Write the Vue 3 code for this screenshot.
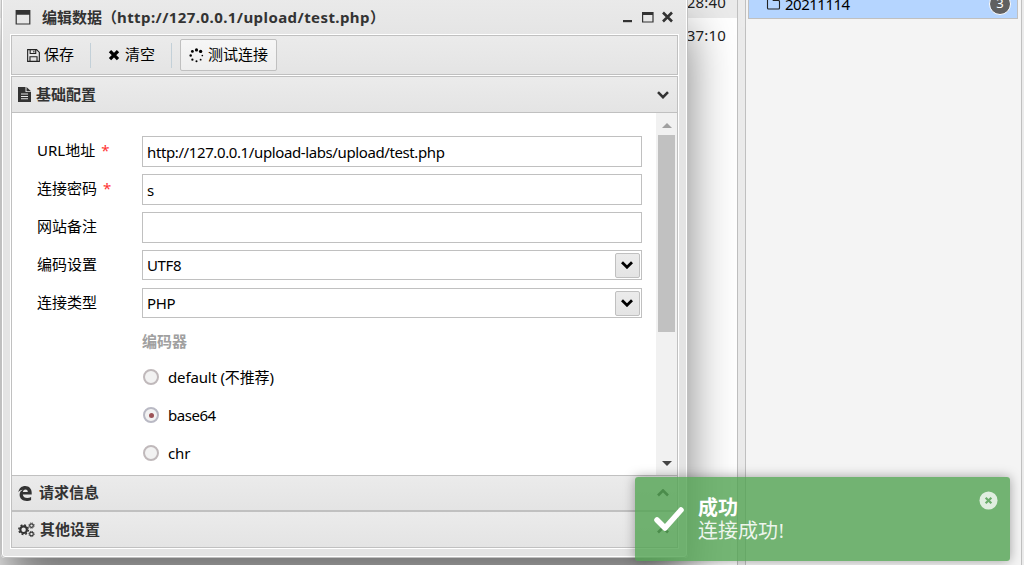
<template>
  <div class="page">
    <div class="list-panel">
      <div class="list-row shaded">28:40</div>
      <div class="list-row">37:10</div>
    </div>
    <div class="splitter"></div>
    <div class="side-panel">
      <div class="category">
        <svg class="folder" viewBox="0 0 16 14"><path d="M1.5 11V2.5q0-1 1-1h3.6l1.2 2h5.2q1 0 1 1V11q0 1-1 1h-10q-1 0-1-1z" /></svg>
        <span class="category-name">20211114</span>
        <span class="badge">3</span>
      </div>
    </div>

    <div class="window">
      <div class="window-title">
        <svg class="win-icon" viewBox="0 0 16 15"><path d="M.6 0h14.8v14.6H.6zM1.8 4.8v8.6h12.4V4.8z" fill-rule="evenodd" /></svg>
        <span class="title-text">编辑数据（<b>http://127.0.0.1/upload/test.php</b>）</span>
        <svg class="win-buttons" viewBox="0 0 52 14">
          <path d="M1 10h9v2.2H1z" />
          <path d="M20 2h11.6v10.6H20zM21.2 5v6.5h9.2V5z" fill-rule="evenodd" />
          <path d="M41 2.5l9 9m0-9l-9 9" class="cross" />
        </svg>
      </div>

      <div class="window-body">
        <div class="toolbar">
          <button class="tool">
            <svg class="tool-icon save" viewBox="0 0 14 14"><path d="M.7.7h9.6l3 3v9.6H.7zM3.4.7v4.2h6V.7M3.2 13.3V8.4h7.6v4.9M7.4 1.8v2" /></svg>
            <span>保存</span>
          </button>
          <i class="sep"></i>
          <button class="tool clear">
            <svg class="tool-icon cross" viewBox="0 0 14 14"><path d="M3 3.2l8 8m0-8l-8 8" /></svg>
            <span>清空</span>
          </button>
          <i class="sep"></i>
          <button class="tool active">
            <svg class="tool-icon spinner" viewBox="0 0 16 16">
              <circle v-for="d in dots" :key="d.x + '-' + d.y" :cx="d.x" :cy="d.y" :r="d.r" />
            </svg>
            <span>测试连接</span>
          </button>
        </div>

        <div class="acc-head first">
          <svg class="acc-icon file" viewBox="0 0 13 15"><path d="M0 0h7.5v5H13v10H0zM8.5 0L13 4.2H8.5zM3 6.6v1h7v-1zm0 2.3v1h7v-1zm0 2.3v1h7v-1z" fill-rule="evenodd" /></svg>
          <span>基础配置</span>
          <svg class="arrow" viewBox="0 0 12 8"><path d="M1 1.2l5 5 5-5" /></svg>
        </div>

        <div class="form-wrap">
          <div class="form">
            <div v-for="f in fields" :key="f.label" class="field">
              <label>{{ f.label }}<em v-if="f.required">*</em></label>
              <div class="control" :class="{ combo: f.select }">
                <span>{{ f.value }}</span>
                <i v-if="f.select" class="drop">
                  <svg viewBox="0 0 12 8"><path d="M1 1.2l5 5 5-5" /></svg>
                </i>
              </div>
            </div>
            <div class="group-label">编码器</div>
            <div v-for="e in encoders" :key="e" class="radio" @click="encoder = e">
              <i class="dot" :class="{ checked: encoder === e }"></i>
              <span>{{ e }}</span>
            </div>
          </div>
          <div class="scrollbar">
            <svg viewBox="0 0 10 5" class="up"><path d="M0 5l5-5 5 5z" /></svg>
            <div class="thumb"></div>
            <svg viewBox="0 0 10 5" class="down"><path d="M0 0h10L5 5z" /></svg>
          </div>
        </div>

        <div class="acc-head">
          <svg class="acc-icon edge-icon" viewBox="0 0 14 15"><path d="M.3 6.2C1.2 2.1 3.8.1 7.2.1c4 0 6.5 2.9 6.5 6.7v1.7H4.8c.2 2.5 2.2 3.5 4.4 3.5 1.4 0 2.7-.4 3.9-1.1v3c-1.2.7-2.8 1-4.5 1-4 0-7-2.2-7-6.1 0-2.2 1.1-4.1 3.2-5.1C2.7 3.9 1.4 4.7.3 6.2zM4.9 5.9h4.9c0-1.5-.8-2.5-2.3-2.5S5.1 4.4 4.9 5.9z" fill-rule="evenodd" /></svg>
          <span>请求信息</span>
          <svg class="arrow" viewBox="0 0 12 8"><path d="M1 6.5l5-5 5 5" /></svg>
        </div>
        <div class="acc-head last">
          <svg class="acc-icon cogs" viewBox="0 0 17 16">
            <circle cx="5.6" cy="7.7" r="3.3" stroke-width="2.2" />
            <circle cx="5.6" cy="7.7" r="4.8" stroke-width="1.5" stroke-dasharray="1.9 1.87" />
            <circle cx="13.5" cy="3.6" r="1.8" stroke-width="1.2" />
            <circle cx="13.5" cy="3.6" r="2.7" stroke-width=".9" stroke-dasharray="1.1 1.02" />
            <circle cx="13.5" cy="12" r="1.8" stroke-width="1.2" />
            <circle cx="13.5" cy="12" r="2.7" stroke-width=".9" stroke-dasharray="1.1 1.02" />
          </svg>
          <span>其他设置</span>
          <svg class="arrow" viewBox="0 0 12 8"><path d="M1 6.5l5-5 5 5" /></svg>
        </div>
      </div>
    </div>

    <div v-if="toast" class="toast">
      <svg class="check" viewBox="0 0 32 26"><path d="M4 14l8 8L28 4" /></svg>
      <div class="toast-text">
        <strong>成功</strong>
        <span>连接成功!</span>
      </div>
      <svg class="toast-close" viewBox="0 0 20 20" @click="toast = false">
        <circle cx="10" cy="10" r="9.5" />
        <path d="M7 7l6 6m0-6l-6 6" />
      </svg>
    </div>
  </div>
</template>

<script setup>
import { ref } from 'vue'

const fields = [
  { label: 'URL地址', required: true, value: 'http://127.0.0.1/upload-labs/upload/test.php' },
  { label: '连接密码', required: true, value: 's' },
  { label: '网站备注', value: '' },
  { label: '编码设置', value: 'UTF8', select: true },
  { label: '连接类型', value: 'PHP', select: true }
]

const encoders = ['default (不推荐)', 'base64', 'chr']
const encoder = ref('base64')
const toast = ref(true)

const dots = [
  { x: 8, y: 2, r: 1.7 },
  { x: 12.4, y: 3.6, r: 1.8 },
  { x: 14.2, y: 8, r: 0.9 },
  { x: 12.4, y: 12.4, r: 1 },
  { x: 8, y: 14.2, r: 1.1 },
  { x: 3.6, y: 12.4, r: 1.2 },
  { x: 1.8, y: 8, r: 1.3 },
  { x: 3.6, y: 3.6, r: 1.5 }
]
</script>

<style>
body {
  overflow: hidden;
}
</style>

<style scoped>
* {
  box-sizing: border-box;
}

.page {
  position: relative;
  display: flex;
  width: 1024px;
  height: 565px;
  overflow: hidden;
  background: #ebebeb;
  font-family: "Noto Sans", "Noto Sans CJK SC", sans-serif;
  font-size: 15px;
  color: #000;
}

.list-panel {
  width: 738px;
  background: #fff;
  border-right: 1px solid #c0c0c0;
}

.list-row {
  height: 34px;
  padding-right: 11px;
  text-align: right;
  line-height: 34px;
  letter-spacing: 0.2px;
  color: #222;
}

.list-row.shaded {
  height: 18px;
  line-height: 5px;
  background: #ebebeb;
}

.splitter {
  width: 7px;
}

.side-panel {
  width: 277px;
  padding: 0 3px 0 2px;
  background: #f4f4f4;
  border-left: 1px solid #c0c0c0;
  border-right: 1px solid #c0c0c0;
}

.category {
  display: flex;
  align-items: center;
  height: 19px;
  padding: 0 6px 11px 17px;
  background: #b5d5ff;
  border: 1px solid #c0c0c0;
  border-top: none;
}

.folder {
  width: 16px;
  height: 14px;
  fill: none;
  stroke: #222;
  stroke-width: 1.1;
}

.category-name {
  flex: 1;
  margin-left: 3px;
  line-height: 18px;
  letter-spacing: -0.5px;
}

.badge {
  width: 22px;
  height: 22px;
  border: 1px solid #fff;
  border-radius: 50%;
  background: #606060;
  color: #fff;
  font-size: 13px;
  line-height: 19px;
  text-align: center;
}

.window {
  position: absolute;
  left: 1px;
  top: -10px;
  width: 687px;
  height: 568px;
  padding: 10px 7px 7px 8px;
  background: linear-gradient(#ebebeb, #e4e4e4 50px);
  border: 1px solid #c0c0c0;
  border-radius: 4px;
  box-shadow: inset 0 0 0 1px #fff, 0 35px 50px -2px rgba(0, 0, 0, 0.55);
}

.window-title {
  display: flex;
  align-items: center;
  height: 34px;
  margin-top: -1px;
  padding: 0 6px 0 5px;
  color: #333;
}

.win-icon {
  width: 16px;
  height: 15px;
  fill: #333;
}

.title-text {
  flex: 1;
  margin-left: 11px;
  padding-bottom: 2px;
  font-weight: 700;
  white-space: nowrap;
}

.title-text b {
  font-weight: 700;
  letter-spacing: 0.42px;
}

.win-buttons {
  width: 52px;
  height: 14px;
  fill: #333;
}

.win-buttons .cross {
  stroke: #333;
  stroke-width: 2.6;
}

.window-body {
  width: 669px;
  height: 515px;
  padding: 1px;
  background: #fff;
}

.toolbar {
  display: flex;
  align-items: center;
  height: 40px;
  padding: 0 5px;
  background: linear-gradient(#ebebeb, #e4e4e4);
  border: 1px solid #c0c0c0;
}

.tool {
  display: flex;
  align-items: center;
  height: 32px;
  padding: 0 7px 0 9px;
  border: 1px solid transparent;
  background: none;
  color: #000;
  font: inherit;
  font-size: 15px;
}

.tool span {
  padding-bottom: 3px;
}

.tool.active {
  padding: 0 8px;
  border-color: #c0c0c0;
  border-radius: 2px;
  background: linear-gradient(#f6f6f6, #eeeeee);
}

.sep {
  width: 1px;
  height: 25px;
  margin: 0 8px;
  background: #c3d0d8;
}

.tool-icon {
  width: 14px;
  height: 14px;
  margin-right: 4px;
}

.tool-icon.save {
  width: 13px;
  height: 13px;
  margin-right: 4px;
}

.save path {
  fill: none;
  stroke: #222;
  stroke-width: 1.2;
}

.tool.clear {
  padding: 0 7px 0 7px;
}

.tool-icon.cross {
  margin-right: 4px;
  fill: none;
  stroke: #000;
  stroke-width: 3.3;
}

.spinner {
  width: 15px;
  height: 15px;
}

.acc-head {
  display: flex;
  align-items: center;
  height: 36px;
  padding: 0 8px 0 6px;
  background: linear-gradient(#ebebeb, #e4e4e4);
  border: 1px solid #c0c0c0;
  color: #333;
  font-weight: 700;
}

.acc-head.first {
  height: 37px;
  margin-top: 1px;
}

.acc-head.last {
  height: 37px;
}

.acc-head span {
  flex: 1;
  margin-left: 5px;
  padding-bottom: 3px;
}

.acc-icon {
  width: 14px;
  height: 15px;
  fill: #333;
}

.acc-icon.file {
  width: 13px;
}

.acc-icon.cogs {
  width: 17px;
  height: 16px;
  fill: none;
  stroke: #333;
}

.acc-head .edge-icon + span {
  margin-left: 7px;
}

.arrow {
  width: 12px;
  height: 8px;
  fill: none;
  stroke: #333;
  stroke-width: 2.6;
}

.form-wrap {
  display: flex;
  height: 362px;
  overflow: hidden;
  border-left: 1px solid #c0c0c0;
  border-right: 1px solid #c0c0c0;
}

.form {
  flex: 1;
  padding: 23px 14px 0 25px;
}

.field {
  display: flex;
  height: 38px;
}

.field label {
  width: 105px;
  line-height: 29px;
}

.field em {
  margin-left: 6px;
  color: #f33;
  font-style: normal;
}

.control {
  display: flex;
  align-items: center;
  width: 500px;
  height: 31px;
  padding: 1px 1px 0 4px;
  border: 1px solid #c0c0c0;
  letter-spacing: -0.39px;
}

.control.combo {
  height: 30px;
  padding-top: 0;
}

.control span {
  flex: 1;
}

.drop {
  display: flex;
  align-items: center;
  justify-content: center;
  width: 25px;
  height: 25px;
  padding-right: 2px;
  border: 1px solid #c0c0c0;
  border-radius: 2px;
  background: linear-gradient(#ebebeb, #e4e4e4);
}

.drop svg {
  width: 12px;
  height: 8px;
  fill: none;
  stroke: #000;
  stroke-width: 2.8;
}

.group-label {
  height: 32px;
  padding-left: 105px;
  color: #a0a0a0;
  font-weight: 700;
  line-height: 30px;
}

.radio {
  display: flex;
  align-items: center;
  height: 38px;
  padding-left: 106px;
}

.radio span {
  margin-left: 9px;
  padding-bottom: 1px;
  letter-spacing: -0.15px;
}

.dot {
  display: flex;
  align-items: center;
  justify-content: center;
  width: 16px;
  height: 16px;
  border: 2px solid #c0b9bb;
  border-radius: 50%;
  background: #f2f2f2;
}

.dot.checked {
  border-color: #b9b9c4;
}

.dot.checked + span {
  letter-spacing: -0.45px;
}

.dot.checked::after {
  content: "";
  width: 5px;
  height: 5px;
  border-radius: 50%;
  background: #9c5357;
}

.scrollbar {
  display: flex;
  flex-direction: column;
  align-items: center;
  width: 21px;
  padding: 10px 2px 9px;
  background: #f1f1f1;
}

.scrollbar svg {
  width: 10px;
  height: 5px;
}

.up {
  fill: #a0a0a0;
}

.down {
  margin-top: auto;
  fill: #444;
}

.thumb {
  width: 17px;
  height: 197px;
  margin-top: 7px;
  background: #c1c1c1;
}

.toast {
  position: absolute;
  left: 635px;
  top: 477px;
  display: flex;
  width: 375px;
  height: 84px;
  padding: 14px 12px 0 18px;
  border-radius: 3px;
  background: rgba(81, 163, 81, 0.8);
  box-shadow: 0 0 12px rgba(0, 0, 0, 0.35);
  color: #fff;
}

.check {
  width: 32px;
  height: 26px;
  margin-top: 15px;
  fill: none;
  stroke: #fff;
  stroke-width: 5.5;
  stroke-linecap: round;
  stroke-linejoin: round;
}

.toast-text {
  display: flex;
  flex: 1;
  flex-direction: column;
  padding-top: 6px;
  margin-left: 13px;
  font-family: "Liberation Serif", "Noto Sans CJK SC", serif;
  font-size: 20px;
  line-height: 23px;
}

.toast-text span {
  color: rgba(255, 255, 255, 0.88);
}

.toast-close {
  width: 19px;
  height: 19px;
}

.toast-close circle {
  fill: #e0eee0;
}

.toast-close path {
  stroke: #6bad6b;
  stroke-width: 2.3;
}
</style>
